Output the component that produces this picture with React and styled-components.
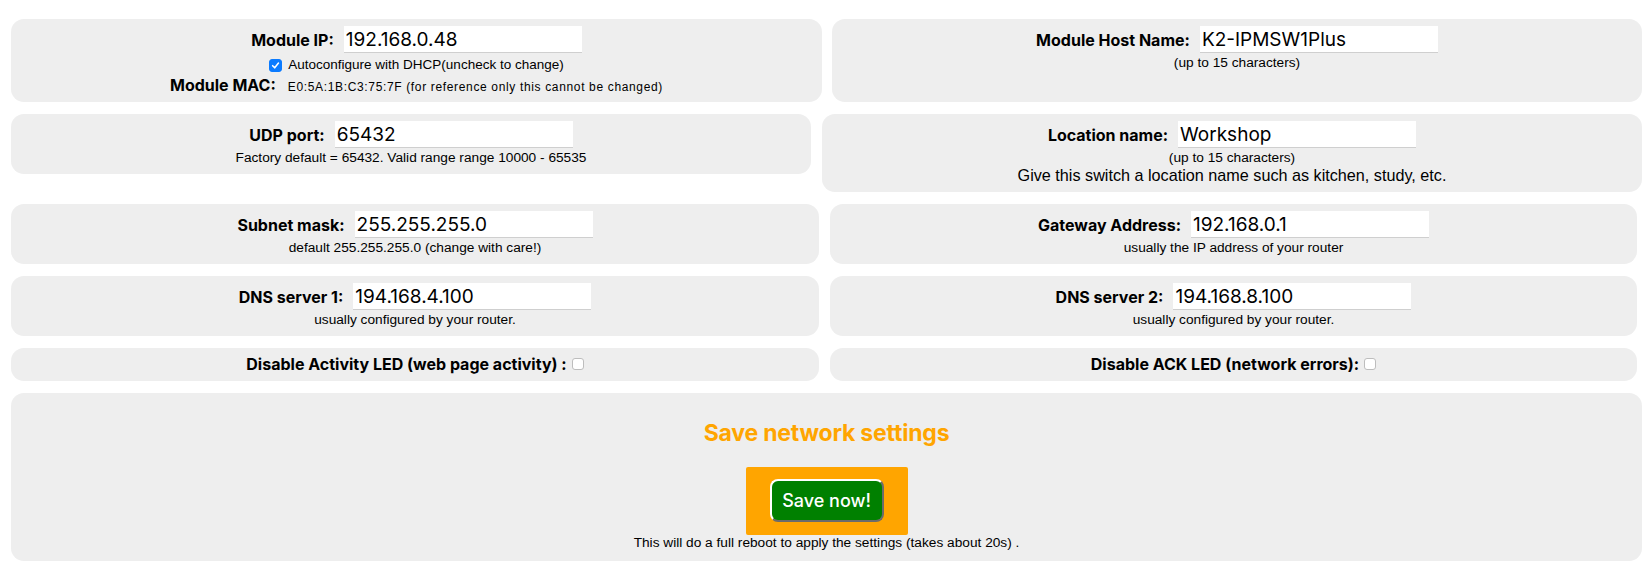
import React from 'react';
import styled, { createGlobalStyle } from 'styled-components';

const Global = createGlobalStyle`
  html, body { margin: 0; padding: 0; background: #ffffff; }
  body {
    font-family: Inter, "Liberation Sans", Arial, sans-serif;
    color: #000;
  }
`;

const textFont = `"Liberation Sans", Arial, Helvetica, sans-serif`;

const Page = styled.div`
  display: flex;
  flex-direction: column;
  gap: 12px;
  padding: 19px 0 7px 11px;
`;

const Row = styled.div`
  display: grid;
  grid-template-columns: ${(p) => p.$left}px ${(p) => p.$right}px;
  column-gap: ${(p) => p.$gap}px;
  align-items: ${(p) => p.$align || 'stretch'};
`;

const Card = styled.div`
  box-sizing: border-box;
  background: #eeeeee;
  border-radius: 13px;
  padding: 7px 8px ${(p) => p.$bottom ?? 8}px;
  display: flex;
  flex-direction: column;
  align-items: center;
`;

const WideCard = styled(Card)`
  width: 1631px;
  padding: 26px 8px 10px;
`;

const FieldLine = styled.div`
  display: flex;
  align-items: center;
  justify-content: center;
  gap: 10px;
`;

const Label = styled.label`
  font-weight: 700;
  font-size: 16px;
  line-height: 18px;
  white-space: nowrap;
`;

const TextInput = styled.input`
  box-sizing: border-box;
  width: 238px;
  height: 27px;
  border: none;
  border-bottom: 1px solid #cfcfcf;
  background: #ffffff;
  font-family: Inter, "Liberation Sans", Arial, sans-serif;
  font-size: 19px;
  color: #000;
  padding: 0 2px;
  outline: none;
`;

const Hint = styled.div`
  font-family: ${textFont};
  font-size: ${(p) => p.$size || 13.7}px;
  line-height: ${(p) => p.$lh || 16}px;
  margin-top: ${(p) => p.$mt ?? 0}px;
  text-align: center;
  white-space: nowrap;
`;

const CheckLine = styled.div`
  display: flex;
  align-items: center;
  justify-content: center;
  gap: 6px;
  font-family: ${textFont};
  font-size: 13.5px;
  line-height: 16px;
  height: 16px;
  margin-top: 4px;
`;

const MacLine = styled.div`
  display: flex;
  align-items: baseline;
  justify-content: center;
  gap: 12px;
  margin-top: 3px;
  line-height: 19px;
  height: 19px;
`;

const MacText = styled.span`
  font-family: ${textFont};
  font-size: 12px;
  letter-spacing: 0.65px;
`;

const ToggleLine = styled.div`
  display: flex;
  align-items: center;
  justify-content: center;
  gap: 5px;
`;

const Box = styled.span`
  box-sizing: border-box;
  display: inline-flex;
  align-items: center;
  justify-content: center;
  width: ${(p) => p.$size}px;
  height: ${(p) => p.$size}px;
  border-radius: 3px;
  background: ${(p) => (p.$checked ? '#0b7bff' : '#ffffff')};
  border: 1px solid ${(p) => (p.$checked ? '#0b7bff' : '#bdbdbd')};
  flex: none;
`;

const Title = styled.div`
  color: #ffa500;
  font-weight: 700;
  font-size: 23px;
  line-height: 28px;
  letter-spacing: -0.2px;
`;

const OrangeBox = styled.div`
  margin-top: 20px;
  background: #ffa500;
  border-radius: 2px;
  padding: 12px 24px 13px;
  display: flex;
`;

const SaveButton = styled.button`
  box-sizing: border-box;
  height: 43px;
  width: 114px;
  background: #008000;
  color: #ffffff;
  font-family: Inter, "Liberation Sans", Arial, sans-serif;
  font-size: 18px;
  font-weight: 500;
  border-radius: 8px;
  border-style: solid;
  border-width: 2px;
  border-color: #ffffff #6b6b6b #6b6b6b #ffffff;
  padding: 0;
  cursor: pointer;
`;

function Checkbox({ checked, size = 13 }) {
  return (
    <Box role="checkbox" aria-checked={checked} $checked={checked} $size={size}>
      {checked && (
        <svg width="9" height="9" viewBox="0 0 10 10">
          <path d="M1.8 5.2 L4.1 7.6 L8.3 2.2" fill="none" stroke="#fff" strokeWidth="1.7" strokeLinecap="round" strokeLinejoin="round" />
        </svg>
      )}
    </Box>
  );
}

function Field({ label, value }) {
  return (
    <FieldLine>
      <Label>{label}</Label>
      <TextInput defaultValue={value} />
    </FieldLine>
  );
}

export default function App() {
  return (
    <>
      <Global />
      <Page>
        <Row $left={811} $right={810} $gap={10}>
          <Card $bottom={7}>
            <Field label="Module IP:" value="192.168.0.48" />
            <CheckLine>
              <Checkbox checked />
              <span>Autoconfigure with DHCP(uncheck to change)</span>
            </CheckLine>
            <MacLine>
              <Label>Module MAC:</Label>
              <MacText>E0:5A:1B:C3:75:7F (for reference only this cannot be changed)</MacText>
            </MacLine>
          </Card>
          <Card>
            <Field label="Module Host Name:" value="K2-IPMSW1Plus" />
            <Hint $mt={2}>(up to 15 characters)</Hint>
          </Card>
        </Row>

        <Row $left={800} $right={820} $gap={11} $align="start">
          <Card>
            <Field label="UDP port:" value="65432" />
            <Hint $mt={2}>Factory default = 65432. Valid range range 10000 - 65535</Hint>
          </Card>
          <Card>
            <Field label="Location name:" value="Workshop" />
            <Hint $mt={2}>(up to 15 characters)</Hint>
            <Hint $size={16.2} $lh={18}>Give this switch a location name such as kitchen, study, etc.</Hint>
          </Card>
        </Row>

        <Row $left={808} $right={807} $gap={11}>
          <Card>
            <Field label="Subnet mask:" value="255.255.255.0" />
            <Hint $mt={2}>default 255.255.255.0 (change with care!)</Hint>
          </Card>
          <Card>
            <Field label="Gateway Address:" value="192.168.0.1" />
            <Hint $mt={2}>usually the IP address of your router</Hint>
          </Card>
        </Row>

        <Row $left={808} $right={807} $gap={11}>
          <Card>
            <Field label="DNS server 1:" value="194.168.4.100" />
            <Hint $mt={2}>usually configured by your router.</Hint>
          </Card>
          <Card>
            <Field label="DNS server 2:" value="194.168.8.100" />
            <Hint $mt={2}>usually configured by your router.</Hint>
          </Card>
        </Row>

        <Row $left={808} $right={807} $gap={11}>
          <Card>
            <ToggleLine>
              <Label>Disable Activity LED (web page activity) :</Label>
              <Checkbox checked={false} size={12} />
            </ToggleLine>
          </Card>
          <Card>
            <ToggleLine>
              <Label>Disable ACK LED (network errors):</Label>
              <Checkbox checked={false} size={12} />
            </ToggleLine>
          </Card>
        </Row>

        <WideCard>
          <Title>Save network settings</Title>
          <OrangeBox>
            <SaveButton type="button">Save now!</SaveButton>
          </OrangeBox>
          <Hint>This will do a full reboot to apply the settings (takes about 20s) .</Hint>
        </WideCard>
      </Page>
    </>
  );
}
